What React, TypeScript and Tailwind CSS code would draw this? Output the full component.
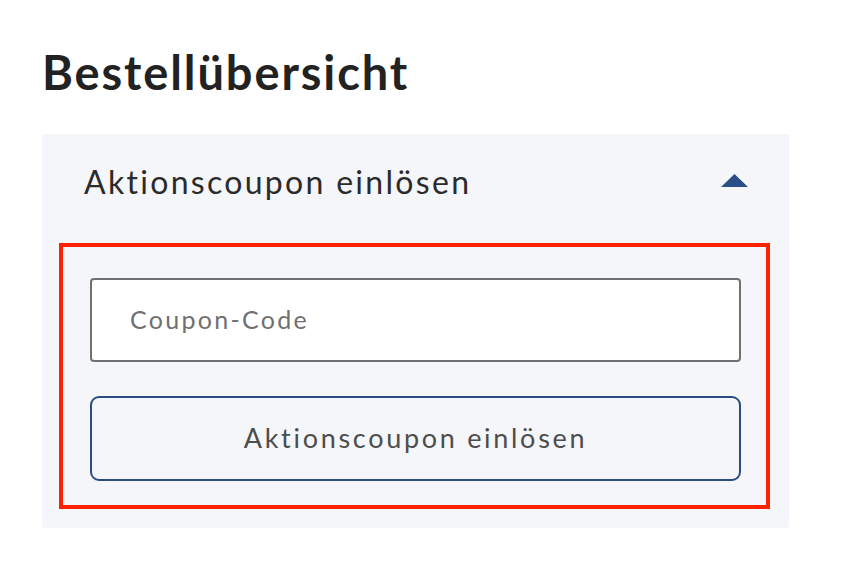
import React from "react";

export default function App() {
  return (
    <div className="w-[846px] h-[564px] bg-white pl-[42px] pt-[44px] font-['Lato','Liberation_Sans',sans-serif]">
      <h1 className="text-[47px] leading-[56px] font-bold text-[#222222] tracking-[1.9px]">Bestellübersicht</h1>
      <div className="mt-[34px] w-[747px] rounded-[3px] bg-[#f5f6fa] pl-[17px] pr-[19px] pb-[19px]">
        <div className="flex h-[109px] items-center justify-between pl-[25px] pr-[22px] pb-[13px]">
          <span className="text-[32px] text-[#2b2b2b] tracking-[2.3px]">Aktionscoupon einlösen</span>
          <svg width="27" height="13" viewBox="0 0 27 13" className="mt-[-3px]">
            <polygon points="13.5,0 27,13 0,13" fill="#2a4f87" />
          </svg>
        </div>
        <div className="border-4 border-[#ff2200] pl-[27px] pr-[25px] pt-[31px] pb-[24px]">
          <div className="flex h-[84px] items-center rounded-[4px] border-2 border-[#707070] bg-white pl-[38px]">
            <span className="text-[25px] text-[#707070] tracking-[2.3px]">Coupon-Code</span>
          </div>
          <button className="mt-[34px] flex h-[85px] w-full items-center justify-center rounded-[9px] border-2 border-[#2a4c82] bg-transparent">
            <span className="text-[27px] text-[#4d4d4d] tracking-[2.7px]">Aktionscoupon einlösen</span>
          </button>
        </div>
      </div>
    </div>
  );
}
